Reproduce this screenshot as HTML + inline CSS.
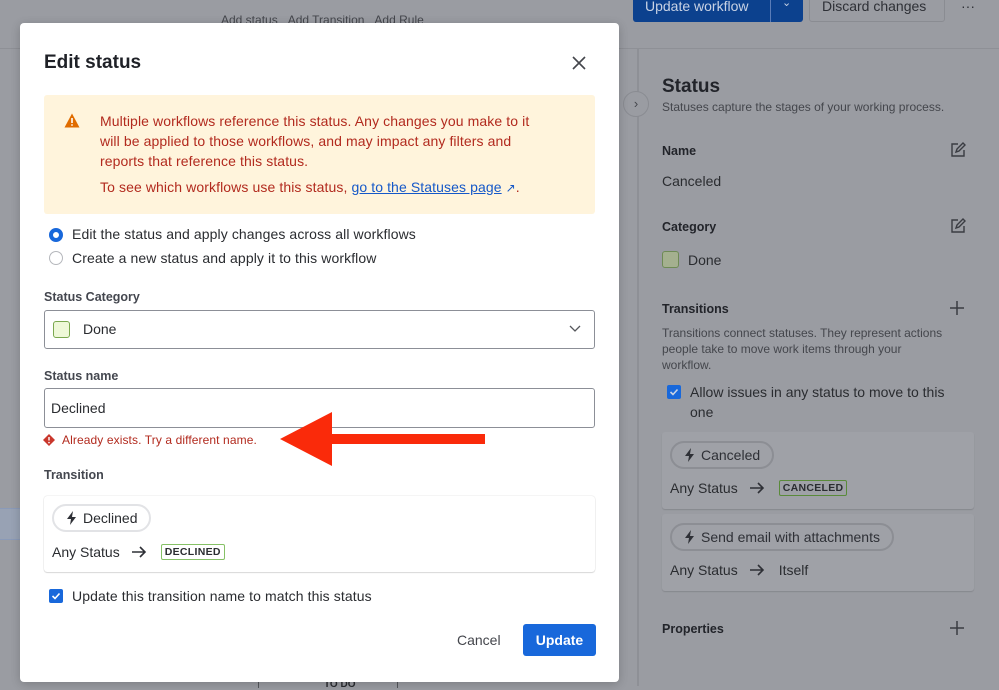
<!DOCTYPE html>
<html><head><meta charset="utf-8"><style>
*{box-sizing:border-box;margin:0;padding:0}
body{width:999px;height:686px;overflow:hidden;background:#9a9ca2;font-family:"Liberation Sans",sans-serif;position:relative;color:#2a2c30}
.abs{position:absolute}
.modal{position:absolute;left:20px;top:23px;width:599px;height:659px;background:#fff;border-radius:4px;box-shadow:0 2px 10px rgba(0,0,0,.2)}
.m{position:absolute}
.lbl{font-size:12.5px;font-weight:bold;color:#44474f}
.pill{position:absolute;border:2px solid #e2e3e6;border-radius:14px;height:28px;font-size:14px;display:flex;align-items:center;padding:0 12px 0 12px;color:#2a2c30}
.pill svg{margin-right:5px}
.lozenge{display:inline-block;border:1px solid #86c166;border-radius:2px;font-size:10.5px;font-weight:bold;padding:1px 3px;letter-spacing:.3px;vertical-align:1px}
.row{display:flex;align-items:center}
.row svg{margin:0 14px 0 12px}
.cb{position:absolute;width:14px;height:14px;background:#1868db;border-radius:2px}
</style></head><body>
<div class="abs" style="left:0;top:48px;width:999px;height:1px;background:#8e9096"></div>
<div class="abs" style="left:221px;top:13px;font-size:12px;color:#44464c">Add status&nbsp;&nbsp;&nbsp;Add Transition&nbsp;&nbsp;&nbsp;Add Rule</div>
<div class="abs" style="left:633px;top:-6px;width:170px;height:28px;background:#0c418e;border-radius:3px"></div>
<div class="abs" style="left:645px;top:-2px;font-size:14px;color:#c8d2e4">Update workflow</div>
<div class="abs" style="left:770px;top:-6px;width:1px;height:28px;background:#5a7cb8"></div>
<div class="abs" style="left:782px;top:-4px;font-size:11px;color:#c8d2e4">⌄</div>
<div class="abs" style="left:809px;top:-6px;width:136px;height:28px;border:1px solid #8a8c92;border-radius:3px"></div>
<div class="abs" style="left:822px;top:-2px;font-size:14px;color:#2e3036">Discard changes</div>
<div class="abs" style="left:961px;top:-2px;font-size:14px;color:#2e3036">···</div>
<div class="abs" style="left:0;top:508px;width:20px;height:32px;background:#98a2b4;border-top:1px solid #8a9ab8;border-bottom:1px solid #8a9ab8"></div>
<div class="abs" style="left:637px;top:49px;width:2px;height:637px;background:#8e9096"></div>
<div class="abs" style="left:623px;top:91px;width:26px;height:26px;border-radius:50%;border:1px solid #8a8c92;background:#9a9ca2;font-size:13px;text-align:center;line-height:23px;color:#44464c">›</div>
<div class="abs" style="left:662px;top:76px;font-size:19px;font-weight:bold;color:#22242a">Status</div>
<div class="abs" style="left:662px;top:100px;font-size:12px;color:#44464c">Statuses capture the stages of your working process.</div>
<div class="abs" style="left:662px;top:144px;font-size:12.5px;font-weight:bold;color:#22242a">Name</div>
<div class="abs" style="left:662px;top:173px;font-size:14px;color:#2a2c30">Canceled</div>
<div class="abs" style="left:662px;top:220px;font-size:12.5px;font-weight:bold;color:#22242a">Category</div>
<svg class="abs" style="left:950px;top:142px" width="16" height="16" viewBox="0 0 16 16" fill="none" stroke="#3a3c42" stroke-width="1.4"><path d="M8 2H2v12h12V8"/><path d="M6 10l1-3 6-6 2 2-6 6z"/></svg>
<svg class="abs" style="left:950px;top:218px" width="16" height="16" viewBox="0 0 16 16" fill="none" stroke="#3a3c42" stroke-width="1.4"><path d="M8 2H2v12h12V8"/><path d="M6 10l1-3 6-6 2 2-6 6z"/></svg>
<div class="abs" style="left:662px;top:251px;width:17px;height:17px;border:1px solid #6e8a55;background:#a4b08f;border-radius:3px"></div>
<div class="abs" style="left:688px;top:252px;font-size:14px">Done</div>
<div class="abs" style="left:662px;top:302px;font-size:12.5px;font-weight:bold;color:#22242a">Transitions</div>
<svg class="abs" style="left:949px;top:300px" width="16" height="16" viewBox="0 0 16 16"><path d="M8 1v14M1 8h14" stroke="#3a3c42" stroke-width="1.5"/></svg>
<div class="abs" style="left:662px;top:325px;width:292px;font-size:12px;line-height:16px;color:#44464c">Transitions connect statuses. They represent actions people take to move work items through your workflow.</div>
<div class="cb" style="left:667px;top:385px"><svg width="14" height="14" viewBox="0 0 14 14"><path d="M3.5 7l2.5 2.5 4.5-5" fill="none" stroke="#c8d2e4" stroke-width="1.6"/></svg></div>
<div class="abs" style="left:690px;top:382px;width:278px;font-size:14px;line-height:20px">Allow issues in any status to move to this one</div>
<div class="abs" style="left:662px;top:432px;width:312px;height:77px;background:#9fa1a7;border-radius:3px;box-shadow:0 1px 1px #86888e"></div>
<div class="pill" style="left:670px;top:441px;border-color:#8c8e94;color:#2e3036"><svg width="12" height="14" viewBox="0 0 12 14"><path d="M7 0L1 8h4l-1 6 6-8H6z" fill="#2e3036"/></svg>Canceled</div>
<div class="abs row" style="left:670px;top:480px;font-size:14px">Any Status<svg width="15" height="12" viewBox="0 0 15 12"><path d="M0 6h13M8 1l5 5-5 5" fill="none" stroke="#2e3036" stroke-width="1.6"/></svg><span class="lozenge" style="border-color:#5a8a3a">CANCELED</span></div>
<div class="abs" style="left:662px;top:514px;width:312px;height:77px;background:#9fa1a7;border-radius:3px;box-shadow:0 1px 1px #86888e"></div>
<div class="pill" style="left:670px;top:523px;border-color:#8c8e94;color:#2e3036"><svg width="12" height="14" viewBox="0 0 12 14"><path d="M7 0L1 8h4l-1 6 6-8H6z" fill="#2e3036"/></svg>Send email with attachments</div>
<div class="abs row" style="left:670px;top:562px;font-size:14px">Any Status<svg width="15" height="12" viewBox="0 0 15 12"><path d="M0 6h13M8 1l5 5-5 5" fill="none" stroke="#2e3036" stroke-width="1.6"/></svg>Itself</div>
<div class="abs" style="left:662px;top:622px;font-size:12.5px;font-weight:bold;color:#22242a">Properties</div>
<svg class="abs" style="left:949px;top:620px" width="16" height="16" viewBox="0 0 16 16"><path d="M8 1v14M1 8h14" stroke="#3a3c42" stroke-width="1.5"/></svg>
<div class="abs" style="left:258px;top:678px;width:140px;height:10px;border:1px solid #55575c;border-bottom:none"></div>
<div class="abs" style="left:324px;top:679px;font-size:10px;font-weight:bold">TO DO</div>

<div class="modal">
<div class="m" style="left:24px;top:29px;font-size:19px;font-weight:bold;color:#1f2127">Edit status</div>
<svg class="m" style="left:552px;top:33px" width="14" height="14" viewBox="0 0 14 14"><path d="M1 1l12 12M13 1L1 13" stroke="#44464c" stroke-width="1.6"/></svg>
<div class="m" style="left:24px;top:72px;width:551px;height:119px;background:#fff4dc;border-radius:3px"></div>
<svg class="m" style="left:44px;top:90px" width="16" height="15" viewBox="0 0 16 15"><path d="M8 0.5L15.5 14.5H0.5z" fill="#e06c00"/><path d="M8 5v5" stroke="#fff" stroke-width="1.6"/><circle cx="8" cy="12" r="0.9" fill="#fff"/></svg>
<div class="m" style="left:80px;top:88px;width:452px;font-size:14px;line-height:20px;color:#b22a1e;letter-spacing:.1px">Multiple workflows reference this status. Any changes you make to it will be applied to those workflows, and may impact any filters and reports that reference this status.</div>
<div class="m" style="left:80px;top:156px;font-size:14px;color:#b22a1e;letter-spacing:.1px">To see which workflows use this status, <span style="color:#1558c8;text-decoration:underline">go to the Statuses page</span> <span style="color:#1558c8;font-size:12px">↗</span>.</div>
<div class="m" style="left:29px;top:205px;width:14px;height:14px;border-radius:50%;border:4px solid #1868db"></div>
<div class="m" style="left:52px;top:203px;font-size:14px;letter-spacing:.1px">Edit the status and apply changes across all workflows</div>
<div class="m" style="left:29px;top:228px;width:14px;height:14px;border-radius:50%;border:1px solid #b5b7bc"></div>
<div class="m" style="left:52px;top:227px;font-size:14px;letter-spacing:.1px">Create a new status and apply it to this workflow</div>
<div class="m lbl" style="left:24px;top:267px">Status Category</div>
<div class="m" style="left:24px;top:287px;width:551px;height:39px;border:1px solid #8c8f97;border-radius:3px"></div>
<div class="m" style="left:33px;top:298px;width:17px;height:17px;border:1px solid #7aa84f;background:#eef8d8;border-radius:3px"></div>
<div class="m" style="left:63px;top:298px;font-size:14px">Done</div>
<svg class="m" style="left:549px;top:302px" width="12" height="8" viewBox="0 0 12 8"><path d="M1 1l5 5 5-5" fill="none" stroke="#55575c" stroke-width="1.3"/></svg>
<div class="m lbl" style="left:24px;top:346px">Status name</div>
<div class="m" style="left:24px;top:365px;width:551px;height:40px;border:1px solid #8c8f97;border-radius:3px"></div>
<div class="m" style="left:31px;top:377px;font-size:14px">Declined</div>
<svg class="m" style="left:23px;top:411px" width="12" height="12" viewBox="0 0 12 12"><path d="M6 0L12 6 6 12 0 6z" fill="#c9372c"/><path d="M6 3v3.5" stroke="#fff" stroke-width="1.4"/><circle cx="6" cy="8.6" r=".8" fill="#fff"/></svg>
<div class="m" style="left:42px;top:410px;font-size:12px;color:#b22a1e;letter-spacing:.1px">Already exists. Try a different name.</div>
<div class="m lbl" style="left:24px;top:445px">Transition</div>
<div class="m" style="left:24px;top:473px;width:551px;height:76px;border-radius:3px;box-shadow:0 0 1px rgba(0,0,0,.25),0 1px 1px rgba(0,0,0,.12)"></div>
<div class="pill" style="left:32px;top:481px"><svg width="12" height="14" viewBox="0 0 12 14"><path d="M7 0L1 8h4l-1 6 6-8H6z" fill="#2e3036"/></svg>Declined</div>
<div class="m row" style="left:32px;top:521px;font-size:14px">Any Status<svg width="15" height="12" viewBox="0 0 15 12"><path d="M0 6h13M8 1l5 5-5 5" fill="none" stroke="#2e3036" stroke-width="1.6"/></svg><span class="lozenge">DECLINED</span></div>
<div class="cb" style="left:29px;top:566px"><svg width="14" height="14" viewBox="0 0 14 14"><path d="M3.5 7l2.5 2.5 4.5-5" fill="none" stroke="#fff" stroke-width="1.6"/></svg></div>
<div class="m" style="left:52px;top:565px;font-size:14px;letter-spacing:.1px">Update this transition name to match this status</div>
<div class="m" style="left:437px;top:609px;font-size:14px;color:#44464c">Cancel</div>
<div class="m" style="left:503px;top:601px;width:73px;height:32px;background:#1868db;border-radius:3px;color:#fff;font-size:14px;font-weight:bold;text-align:center;line-height:32px">Update</div>
</div>
<svg class="abs" style="left:280px;top:412px" width="210" height="54" viewBox="0 0 210 54"><path d="M205 22H52V0L0 27l52 27V32h153z" fill="#fa2a0a"/></svg>
</body></html>
